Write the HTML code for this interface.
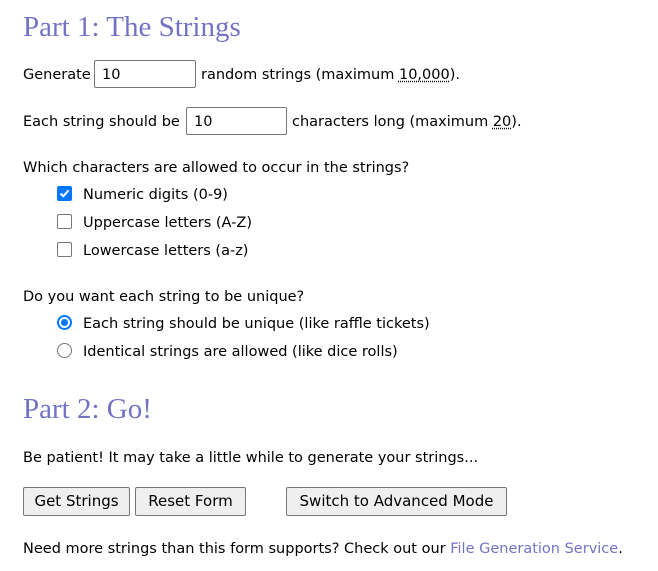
<!DOCTYPE html>
<html><head><style>
body{margin:0;background:#fff;font-family:"DejaVu Sans","Liberation Sans",sans-serif;font-size:14.5px;color:#000;width:658px;height:571px;position:relative;overflow:hidden}
.a{position:absolute;white-space:nowrap;line-height:18px;margin-top:1px}
h2{position:absolute;margin:0;font-family:"Liberation Serif",Georgia,serif;font-weight:normal;font-size:29px;color:#7373c6;line-height:32px;left:23px}
.in{position:absolute;border:1px solid #767676;border-radius:2px;box-sizing:border-box;padding:5px 7px 3px;font-size:14.5px;line-height:18px}
.cb{position:absolute;left:57px;width:15px;height:15px;border:1px solid #767676;border-radius:2px;box-sizing:border-box;background:#fff}
.cb.on{background:#0075ff;border-color:#0075ff}
.rb{position:absolute;left:57px;width:15px;height:15px;border:1px solid #767676;border-radius:50%;box-sizing:border-box}
.rb.on{border:2px solid #0075ff}
.rb.on::after{content:"";position:absolute;left:2px;top:2px;width:7px;height:7px;border-radius:50%;background:#0075ff}
.bt{position:absolute;top:487px;height:29px;box-sizing:border-box;border:1px solid #767676;border-radius:2px;background:#efefef;text-align:center;line-height:27px;font-size:15px}
u{text-decoration:underline dotted;text-underline-offset:2px}
</style></head><body>
<h2 style="top:11px">Part 1: The Strings</h2>
<div class="a" style="left:23px;top:65px">Generate</div>
<div class="in" style="left:94px;top:60px;width:102px;height:28px">10</div>
<div class="a" style="left:201px;top:65px">random strings (maximum <u>10,000</u>).</div>
<div class="a" style="left:23px;top:112px">Each string should be</div>
<div class="in" style="left:186px;top:107px;width:101px;height:28px">10</div>
<div class="a" style="left:292px;top:112px">characters long (maximum <u>20</u>).</div>
<div class="a" style="left:23px;top:158px">Which characters are allowed to occur in the strings?</div>
<div class="cb on" style="top:186px"><svg width="13" height="13" viewBox="0 0 13 13" style="position:absolute;left:0;top:0"><path d="M2.5 6.5 L5.3 9.3 L10.5 3.3" stroke="#fff" stroke-width="2" fill="none"/></svg></div>
<div class="a" style="left:83px;top:185px">Numeric digits (0-9)</div>
<div class="cb" style="top:214px"></div>
<div class="a" style="left:83px;top:213px">Uppercase letters (A-Z)</div>
<div class="cb" style="top:242px"></div>
<div class="a" style="left:83px;top:241px">Lowercase letters (a-z)</div>
<div class="a" style="left:23px;top:287px">Do you want each string to be unique?</div>
<div class="rb on" style="top:315px"></div>
<div class="a" style="left:83px;top:314px">Each string should be unique (like raffle tickets)</div>
<div class="rb" style="top:343px"></div>
<div class="a" style="left:83px;top:342px">Identical strings are allowed (like dice rolls)</div>
<h2 style="top:393px">Part 2: Go!</h2>
<div class="a" style="left:23px;top:448px">Be patient! It may take a little while to generate your strings...</div>
<div class="bt" style="left:23px;width:107px">Get Strings</div>
<div class="bt" style="left:135px;width:111px">Reset Form</div>
<div class="bt" style="left:286px;width:221px">Switch to Advanced Mode</div>
<div class="a" style="left:23px;top:539px">Need more strings than this form supports? Check out our <span style="color:#7373c6">File Generation Service</span>.</div>
</body></html>
